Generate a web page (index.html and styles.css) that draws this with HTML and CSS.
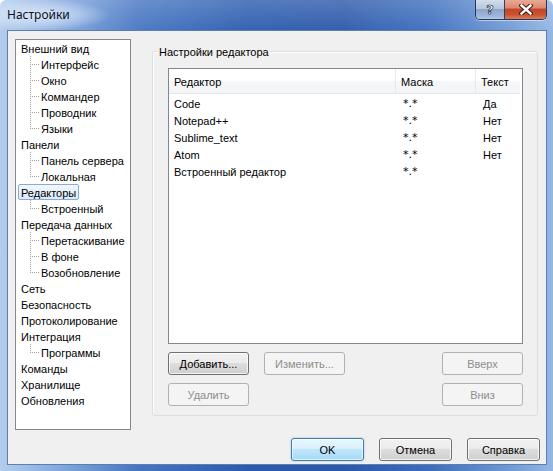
FILE: index.html
```html
<!DOCTYPE html>
<html lang="ru">
<head>
<meta charset="utf-8">
<title>Настройки</title>
<link rel="stylesheet" href="styles.css">
</head>
<body>
<div class="window">
  <div class="titlebar">
    <span class="title">Настройки</span>
    <div class="caption-buttons">
      <div class="cap help"><span>?</span></div>
      <div class="cap close">
        <svg width="14" height="11" viewBox="0 0 14 11">
          <path d="M2.5 1.5 L11.5 9.5 M11.5 1.5 L2.5 9.5" stroke="#3a1a14" stroke-width="4.4" stroke-linecap="square" fill="none"/>
          <path d="M2.5 1.5 L11.5 9.5 M11.5 1.5 L2.5 9.5" stroke="#ffffff" stroke-width="2.4" stroke-linecap="square" fill="none"/>
        </svg>
      </div>
    </div>
  </div>

  <div class="client">
    <div class="main">
      <ul class="tree">
        <li class="node"><span class="label">Внешний вид</span></li>
        <li class="node child"><span class="label">Интерфейс</span></li>
        <li class="node child"><span class="label">Окно</span></li>
        <li class="node child"><span class="label">Коммандер</span></li>
        <li class="node child"><span class="label">Проводник</span></li>
        <li class="node child last"><span class="label">Языки</span></li>
        <li class="node"><span class="label">Панели</span></li>
        <li class="node child"><span class="label">Панель сервера</span></li>
        <li class="node child last"><span class="label">Локальная</span></li>
        <li class="node"><span class="label selected">Редакторы</span></li>
        <li class="node child last"><span class="label">Встроенный</span></li>
        <li class="node"><span class="label">Передача данных</span></li>
        <li class="node child"><span class="label">Перетаскивание</span></li>
        <li class="node child"><span class="label">В фоне</span></li>
        <li class="node child last"><span class="label">Возобновление</span></li>
        <li class="node"><span class="label">Сеть</span></li>
        <li class="node"><span class="label">Безопасность</span></li>
        <li class="node"><span class="label">Протоколирование</span></li>
        <li class="node"><span class="label">Интеграция</span></li>
        <li class="node child last"><span class="label">Программы</span></li>
        <li class="node"><span class="label">Команды</span></li>
        <li class="node"><span class="label">Хранилище</span></li>
        <li class="node"><span class="label">Обновления</span></li>
      </ul>

      <div class="group">
        <span class="group-title">Настройки редактора</span>
        <div class="listview">
          <div class="lv-header">
            <span class="lv-col">Редактор</span>
            <span class="lv-col">Маска</span>
            <span class="lv-col">Текст</span>
          </div>
          <div class="lv-body">
            <div class="lv-row"><span>Code</span><span class="mask">*.*</span><span>Да</span></div>
            <div class="lv-row"><span>Notepad++</span><span class="mask">*.*</span><span>Нет</span></div>
            <div class="lv-row"><span>Sublime_text</span><span class="mask">*.*</span><span>Нет</span></div>
            <div class="lv-row"><span>Atom</span><span class="mask">*.*</span><span>Нет</span></div>
            <div class="lv-row"><span>Встроенный редактор</span><span class="mask">*.*</span><span></span></div>
          </div>
        </div>
        <div class="btn-row">
          <button class="btn">Добавить...</button>
          <button class="btn gap-left" disabled>Изменить...</button>
          <button class="btn push-right" disabled>Вверх</button>
        </div>
        <div class="btn-row">
          <button class="btn" disabled>Удалить</button>
          <button class="btn push-right" disabled>Вниз</button>
        </div>
      </div>
    </div>

    <div class="dialog-buttons">
      <button class="btn wide default">OK</button>
      <button class="btn wide">Отмена</button>
      <button class="btn wide">Справка</button>
    </div>
  </div>
</div>
</body>
</html>
```

FILE: styles.css
```css
html, body {
  margin: 0;
  padding: 0;
  background: #ffffff;
}

.window {
  width: 553px;
  height: 471px;
  box-sizing: border-box;
  display: flex;
  flex-direction: column;
  border-radius: 6px 6px 0 0;
  background:
    linear-gradient(to bottom, rgba(255,255,255,0.2) 0, rgba(255,255,255,0.05) 30px, rgba(0,0,0,0) 31px),
    linear-gradient(to right, #b3cdee 0, #86abe0 10%, #4575c2 25%, #2b5bae 45%, #2a58aa 62%, #3d6ebd 78%, #6f9ad6 92%, #94b6e4 100%);
  font-family: "Liberation Sans", Arial, sans-serif;
  font-size: 11px;
  color: #000;
}

/* caption */
.titlebar {
  height: 30px;
  display: flex;
  align-items: flex-start;
  padding-left: 7px;
  flex: none;
  background: radial-gradient(ellipse 70px 16px at 40px 15px, rgba(225,236,250,0.85) 0, rgba(225,236,250,0.4) 60%, rgba(225,236,250,0) 100%);
}

.title {
  font-family: "Noto Sans", "Liberation Sans", sans-serif;
  font-size: 12px;
  line-height: 30px;
  color: #0b1018;
}

.caption-buttons {
  margin-left: auto;
  margin-right: 6px;
  display: flex;
  height: 19px;
  border: 1px solid #24385a;
  border-top: none;
  border-radius: 0 0 5px 5px;
  overflow: hidden;
  box-shadow: 0 1px 0 rgba(255,255,255,0.5);
}

.cap {
  height: 19px;
  display: flex;
  align-items: center;
  justify-content: center;
}

.help {
  width: 28px;
  border-right: 1px solid #2c4063;
  background: linear-gradient(to bottom, #d3dded 0, #b8c8df 45%, #8ea6cb 50%, #9fb6d9 85%, #b7cbe7 100%);
}

.help span {
  font-family: "DejaVu Sans", sans-serif;
  font-weight: bold;
  font-size: 13px;
  line-height: 13px;
  color: #ffffff;
  -webkit-text-stroke: 0.7px #1f2d44;
}

.close {
  width: 41px;
  background: linear-gradient(to bottom, #e9a995 0, #dc8a72 40%, #c5452c 50%, #c8512f 75%, #e07b55 100%);
}

/* dialog client area */
.client {
  flex: 1;
  margin: 0 6px 6px 7px;
  border: 1px solid #5f7ea9;
  background: #f0f0f0;
  padding: 8px 6px 0 7px;
  display: flex;
  flex-direction: column;
}

.main {
  display: flex;
  align-items: flex-start;
}

/* navigation tree */
.tree {
  width: 116px;
  height: 391px;
  box-sizing: border-box;
  margin: 0;
  padding: 0;
  list-style: none;
  background: #ffffff;
  border: 1px solid #828790;
  flex: none;
}

.node {
  position: relative;
  height: 16px;
  display: flex;
  align-items: center;
}

.label {
  margin-left: 2px;
  padding: 1px 2px 0;
  height: 13px;
  line-height: 14px;
  border: 1px solid transparent;
  border-radius: 2px;
  white-space: nowrap;
}

.child .label {
  margin-left: 22px;
}

.label.selected {
  border-color: #84acdd;
  background: linear-gradient(to bottom, #f2f8fe 0, #dcebfc 100%);
}

/* dotted connector lines */
.child::before {
  content: "";
  position: absolute;
  left: 14px;
  top: 0;
  width: 1px;
  height: 16px;
  background: repeating-linear-gradient(to bottom, #a0a0a0 0 1px, transparent 1px 2px);
}

.child.last::before {
  height: 9px;
}

.child::after {
  content: "";
  position: absolute;
  left: 16px;
  top: 8px;
  width: 7px;
  height: 1px;
  background: repeating-linear-gradient(to right, #a0a0a0 0 1px, transparent 1px 2px);
}

/* editor group box */
.group {
  position: relative;
  margin-left: 21px;
  margin-top: 12px;
  width: 386px;
  height: 365px;
  box-sizing: border-box;
  border: 1px solid #d5dfe5;
  border-radius: 3px;
  box-shadow: inset 1px 1px 0 #ffffff;
  padding: 16px 14px 0 15px;
}

.group-title {
  position: absolute;
  top: -7px;
  left: 5px;
  padding: 0 1px;
  line-height: 14px;
  background: #f0f0f0;
}

.listview {
  width: 355px;
  height: 276px;
  box-sizing: border-box;
  border: 1px solid #828790;
  background: #ffffff;
}

.lv-header,
.lv-row {
  display: grid;
  grid-template-columns: 227px 80px 1fr;
}

.lv-header {
  height: 25px;
  box-sizing: border-box;
  border-bottom: 1px solid #e5e7ea;
  background: linear-gradient(to bottom, #ffffff 0, #ffffff 50%, #f6f7f9 51%, #f3f4f6 100%);
  margin-right: 2px;
}

.lv-col {
  padding: 1px 0 0 5px;
  line-height: 24px;
  border-right: 1px solid #e3e8ee;
}

.lv-col:last-child {
  border-right: none;
}

.lv-body {
  padding-top: 1px;
}

.lv-row {
  height: 17px;
  line-height: 18px;
}

.lv-row span {
  padding-left: 5px;
  white-space: nowrap;
}

.lv-row span:nth-child(2),
.lv-row span:nth-child(3) {
  padding-left: 7px;
}

.lv-row .mask {
  font-family: "DejaVu Sans", sans-serif;
  font-size: 11px;
}

/* push buttons */
.btn-row {
  display: flex;
  margin-top: 8px;
}

.btn {
  width: 81px;
  height: 23px;
  box-sizing: border-box;
  padding: 0;
  font-family: inherit;
  font-size: 11px;
  color: #000;
  border: 1px solid #707070;
  border-radius: 3px;
  background: linear-gradient(to bottom, #f2f2f2 0, #ebebeb 48%, #dddddd 50%, #cfcfcf 100%);
  box-shadow: inset 0 0 0 1px rgba(255,255,255,0.75);
}

.btn:disabled {
  color: #8d8d8d;
  border-color: #adb2b5;
  background: #f4f4f4;
  box-shadow: none;
}

.gap-left {
  margin-left: 15px;
}

.push-right {
  margin-left: auto;
}

.dialog-buttons {
  margin-top: 8px;
  display: flex;
  justify-content: flex-end;
  gap: 15px;
}

.btn.wide {
  width: 73px;
}

.btn.default {
  border-color: #3c7fb1;
  background: linear-gradient(to bottom, #eaf6fd 0, #d9f0fc 48%, #bee6fd 50%, #a7d9f5 100%);
  box-shadow: inset 0 0 0 1px rgba(255,255,255,0.6), 0 0 2px rgba(60,127,177,0.5);
}
```
